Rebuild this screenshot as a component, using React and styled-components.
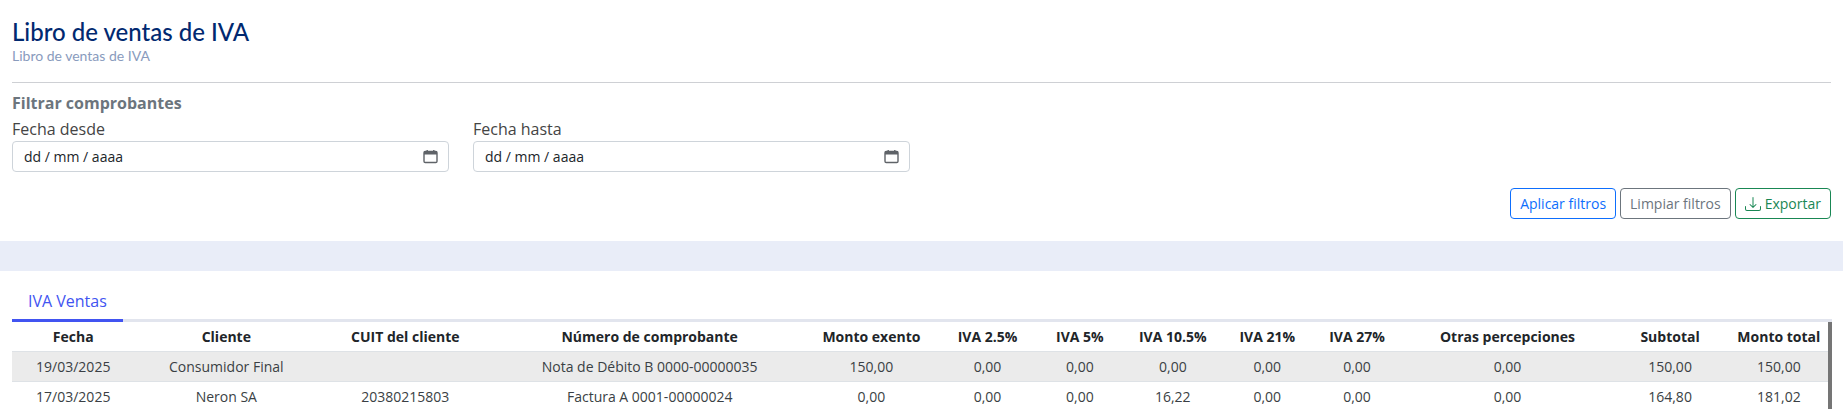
import React from "react";
import styled, { createGlobalStyle } from "styled-components";

const Global = createGlobalStyle`
  html, body { margin: 0; padding: 0; background: #fff; }
  body { font-family: "Open Sans", "Liberation Sans", sans-serif; color: #212529; overflow: hidden; }
  * { box-sizing: border-box; }
`;

const Page = styled.div`
  width: 1843px;
  height: 409px;
  overflow: hidden;
  background: #fff;
`;
const FilterCard = styled.section`
  height: 241px;
  padding: 17px 12px 0 12px;
`;
const Title = styled.h1`
  margin: 0;
  font-family: "Lato", "Noto Sans", sans-serif;
  font-weight: 500;
  font-size: 24px;
  line-height: 29px;
  color: #012970;
`;
const Subtitle = styled.div`
  font-family: "Lato", "Noto Sans", sans-serif;
  font-size: 14px;
  line-height: 18px;
  margin-top: 1px;
  color: #899bbd;
`;
const Divider = styled.hr`
  margin: 17px 0 0;
  border: 0;
  height: 1px;
  background: #ced0d4;
`;
const FilterTitle = styled.h2`
  margin: 10px 0 0;
  font-size: 16px;
  line-height: 20px;
  font-weight: 700;
  color: #6c757d;
`;
const Fields = styled.div`
  display: flex;
  gap: 24px;
  margin-top: 4px;
`;
const Field = styled.div`
  width: 437px;
`;
const Label = styled.label`
  display: block;
  font-size: 16px;
  line-height: 24px;
  color: #444;
`;
const DateBox = styled.div`
  display: flex;
  align-items: center;
  justify-content: space-between;
  height: 31px;
  padding: 0 10px 0 11px;
  border: 1px solid #ced4da;
  border-radius: 4px;
  font-size: 14px;
  color: #212529;
`;
const Actions = styled.div`
  display: flex;
  justify-content: flex-end;
  gap: 4px;
  margin-top: 16px;
  padding-right: -1px;
`;
const Btn = styled.button`
  height: 31px;
  padding: 0 9px;
  background: #fff;
  border: 1px solid ${(p) => p.$c};
  color: ${(p) => p.$c};
  border-radius: 4px;
  font-family: inherit;
  font-size: 14px;
  display: inline-flex;
  align-items: center;
  gap: 4px;
`;
const Band = styled.div`
  height: 30px;
  background: #e9edf8;
`;
const TabsCard = styled.section`
  padding: 0 11px 0 12px;
`;
const TabBar = styled.div`
  display: flex;
  height: 51px;
  padding-top: 18px;
  border-bottom: 3px solid #e2e5ee;
`;
const Tab = styled.div`
  width: 111px;
  height: 33px;
  padding: 0 16px;
  font-size: 16px;
  line-height: 24px;
  color: #4154f1;
  border-bottom: 3px solid #4154f1;
  margin-bottom: -3px;
  box-sizing: content-box;
  box-sizing: border-box;
`;
const TableWrap = styled.div`
  border-right: 4px solid #757575;
  margin-right: 0;
`;
const Table = styled.table`
  width: 100%;
  border-collapse: collapse;
  table-layout: fixed;
  font-size: 14px;
`;
const Th = styled.th`
  height: 29px;
  padding: 0;
  font-weight: 700;
  text-align: center;
  color: #212529;
  border-bottom: 1px solid #dee2e6;
`;
const Tr = styled.tr`
  background: ${(p) => (p.$shade ? "#ebebeb" : "#fff")};
`;
const Td = styled.td`
  height: 30px;
  padding: 0;
  text-align: center;
  color: #3a3f44;
  border-bottom: 1px solid #dee2e6;
`;

const Calendar = () => (
  <svg width="15" height="15" viewBox="0 0 15 15" fill="none" aria-hidden="true">
    <rect x="1" y="2.5" width="13" height="11" rx="1.2" stroke="#5f6368" strokeWidth="1.4" />
    <rect x="1" y="2.5" width="13" height="3" fill="#5f6368" />
    <rect x="3.5" y="1" width="1.4" height="2" fill="#5f6368" />
    <rect x="10.1" y="1" width="1.4" height="2" fill="#5f6368" />
  </svg>
);
const Download = () => (
  <svg width="16" height="16" viewBox="0 0 16 16" fill="currentColor" aria-hidden="true">
    <path d="M.5 9.9a.5.5 0 0 1 .5.5v2.5a1 1 0 0 0 1 1h12a1 1 0 0 0 1-1v-2.5a.5.5 0 0 1 1 0v2.5a2 2 0 0 1-2 2H2a2 2 0 0 1-2-2v-2.5a.5.5 0 0 1 .5-.5z" />
    <path d="M7.646 11.854a.5.5 0 0 0 .708 0l3-3a.5.5 0 0 0-.708-.708L8.5 10.293V1.5a.5.5 0 0 0-1 0v8.793L5.354 8.146a.5.5 0 1 0-.708.708l3 3z" />
  </svg>
);

const cols = [
  ["Fecha", 116], ["Cliente", 174], ["CUIT del cliente", 165], ["Número de comprobante", 298],
  ["Monto exento", 122], ["IVA 2.5%", 98], ["IVA 5%", 77], ["IVA 10.5%", 99], ["IVA 21%", 80], ["IVA 27%", 90],
  ["Otras percepciones", 195], ["Subtotal", 113], ["Monto total", 93],
];
const rows = [
  ["19/03/2025", "Consumidor Final", "", "Nota de Débito B 0000-00000035", "150,00", "0,00", "0,00", "0,00", "0,00", "0,00", "0,00", "150,00", "150,00"],
  ["17/03/2025", "Neron SA", "20380215803", "Factura A 0001-00000024", "0,00", "0,00", "0,00", "16,22", "0,00", "0,00", "0,00", "164,80", "181,02"],
];

const DateField = ({ label }) => (
  <Field>
    <Label>{label}</Label>
    <DateBox>
      <span>dd / mm / aaaa</span>
      <Calendar />
    </DateBox>
  </Field>
);

export default function App() {
  return (
    <Page>
      <Global />
      <FilterCard>
        <Title>Libro de ventas de IVA</Title>
        <Subtitle>Libro de ventas de IVA</Subtitle>
        <Divider />
        <FilterTitle>Filtrar comprobantes</FilterTitle>
        <Fields>
          <DateField label="Fecha desde" />
          <DateField label="Fecha hasta" />
        </Fields>
        <Actions>
          <Btn $c="#0d6efd">Aplicar filtros</Btn>
          <Btn $c="#6c757d">Limpiar filtros</Btn>
          <Btn $c="#198754"><Download />Exportar</Btn>
        </Actions>
      </FilterCard>
      <Band />
      <TabsCard>
        <TabBar><Tab>IVA Ventas</Tab></TabBar>
        <TableWrap>
          <Table>
            <colgroup>{cols.map(([n, w]) => <col key={n} style={{ width: w }} />)}</colgroup>
            <thead><tr>{cols.map(([n]) => <Th key={n}>{n}</Th>)}</tr></thead>
            <tbody>
              {rows.map((r, i) => (
                <Tr key={i} $shade={i === 0}>{r.map((c, j) => <Td key={j}>{c}</Td>)}</Tr>
              ))}
            </tbody>
          </Table>
        </TableWrap>
      </TabsCard>
    </Page>
  );
}
